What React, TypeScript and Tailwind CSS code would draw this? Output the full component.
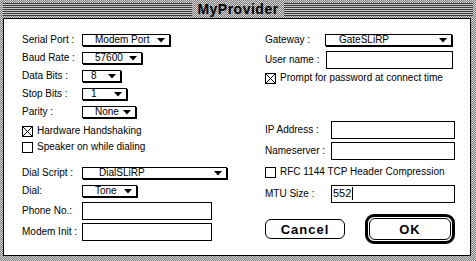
const ui = "font-['Liberation_Sans',Arial,sans-serif] text-[10px] leading-none text-black";

function Tri() {
  return (
    <svg width="8" height="5" viewBox="0 0 8 5" className="shrink-0">
      <polygon points="0,0 8,0 4,4.5" fill="#000" />
    </svg>
  );
}

function Popup({ label, cls }: { label: string; cls: string }) {
  return (
    <div
      className={`flex h-[12px] items-center justify-between border border-black bg-white pr-[4px] shadow-[1px_1px_0_#000] ${cls}`}
    >
      <span>{label}</span>
      <Tri />
    </div>
  );
}

function Field({ cls, children }: { cls: string; children?: React.ReactNode }) {
  return (
    <div className={`flex h-[18px] items-center border border-black bg-white pl-[1px] ${cls}`}>
      {children}
    </div>
  );
}

function Check({ on, label }: { on?: boolean; label: string }) {
  return (
    <div className="flex h-[16px] items-center gap-[4px]">
      <svg width="11" height="11" viewBox="0 0 11 11" className="shrink-0">
        <rect x="0.5" y="0.5" width="10" height="10" fill="#fff" stroke="#000" />
        {on && (
          <>
            <line x1="0.5" y1="0.5" x2="10.5" y2="10.5" stroke="#000" />
            <line x1="10.5" y1="0.5" x2="0.5" y2="10.5" stroke="#000" />
          </>
        )}
      </svg>
      <span>{label}</span>
    </div>
  );
}

export default function App() {
  return (
    <div className="flex h-[261px] w-[476px] flex-col bg-[repeating-conic-gradient(#7a7a7a_0%_25%,#d6d6d6_0%_50%)] bg-[length:2px_2px] pb-[5px] pl-[3px] pr-[5px]">
      {/* title bar */}
      <div className="flex h-[18px] items-center">
        <div className="h-[13px] flex-1 bg-[repeating-linear-gradient(#3a3a3a_0_1px,#c8c8c8_1px_2px)]" />
        <div className="px-[5px] font-['Liberation_Sans',Arial,sans-serif] text-[14px] font-bold leading-none tracking-[0.5px] text-black">
          MyProvider
        </div>
        <div className="mr-[-2px] h-[13px] flex-1 bg-[repeating-linear-gradient(#3a3a3a_0_1px,#c8c8c8_1px_2px)]" />
      </div>

      {/* dialog body */}
      <div className={`flex flex-1 border border-black bg-white pl-[18px] ${ui}`}>
        {/* left column */}
        <div className="flex w-[243px] flex-col pt-[12px]">
          <div className="flex h-[18px] items-center">
            <span className="w-[60px]">Serial Port :</span>
            <Popup label="Modem Port" cls="w-[88px] pl-[12px]" />
          </div>
          <div className="flex h-[18px] items-center">
            <span className="w-[60px]">Baud Rate :</span>
            <Popup label="57600" cls="w-[60px] pl-[12px]" />
          </div>
          <div className="flex h-[18px] items-center">
            <span className="w-[60px]">Data Bits :</span>
            <Popup label="8" cls="w-[39px] pl-[8px]" />
          </div>
          <div className="flex h-[18px] items-center">
            <span className="w-[60px]">Stop Bits :</span>
            <Popup label="1" cls="w-[45px] pl-[8px]" />
          </div>
          <div className="flex h-[18px] items-center">
            <span className="w-[60px]">Parity :</span>
            <Popup label="None" cls="w-[54px] pl-[12px]" />
          </div>

          <div className="mt-[2px]">
            <Check on label="Hardware Handshaking" />
            <Check label="Speaker on while dialing" />
          </div>

          <div className="mt-[9px] flex h-[18px] items-center">
            <span className="w-[60px]">Dial Script :</span>
            <Popup label="DialSLiRP" cls="w-[145px] pl-[16px]" />
          </div>
          <div className="flex h-[18px] items-center">
            <span className="w-[60px]">Dial:</span>
            <Popup label="Tone" cls="w-[55px] pl-[12px]" />
          </div>
          <div className="flex h-[21px] items-center">
            <span className="w-[60px]">Phone No.:</span>
            <Field cls="w-[130px]" />
          </div>
          <div className="flex h-[21px] items-center">
            <span className="w-[60px]">Modem Init :</span>
            <Field cls="w-[130px]" />
          </div>
        </div>

        {/* right column */}
        <div className="flex flex-col pt-[12px]">
          <div className="flex h-[18px] items-center">
            <span className="w-[60px]">Gateway :</span>
            <Popup label="GateSLiRP" cls="w-[127px] pl-[13px]" />
          </div>
          <div className="flex h-[21px] items-center">
            <span className="w-[61px]">User name :</span>
            <Field cls="w-[127px]" />
          </div>
          <Check on label="Prompt for password at connect time" />

          <div className="mt-[33px] flex h-[21px] items-center">
            <span className="w-[66px]">IP Address :</span>
            <Field cls="w-[124px]" />
          </div>
          <div className="flex h-[21px] items-center">
            <span className="w-[66px]">Nameserver :</span>
            <Field cls="w-[124px]" />
          </div>
          <div className="mt-[3px]">
            <Check label="RFC 1144 TCP Header Compression" />
          </div>
          <div className="mt-[3px] flex h-[21px] items-center">
            <span className="w-[66px]">MTU Size :</span>
            <Field cls="w-[124px] text-[11px]">
              <span>552</span>
              <span className="ml-[1px] h-[13px] w-[1px] bg-black" />
            </Field>
          </div>

          <div className="mt-[10px] flex h-[30px] items-center gap-[20px]">
            <div className="flex h-[20px] w-[80px] items-center justify-center rounded-[6px] border border-black text-[13px] font-bold tracking-[1px]">
              Cancel
            </div>
            <div className="h-[30px] w-[90px] rounded-[9px] border-[3px] border-black p-[1px]">
              <div className="flex h-full w-full items-center justify-center rounded-[6px] border border-black text-[13px] font-bold tracking-[1px]">
                OK
              </div>
            </div>
          </div>
        </div>
      </div>
    </div>
  );
}
